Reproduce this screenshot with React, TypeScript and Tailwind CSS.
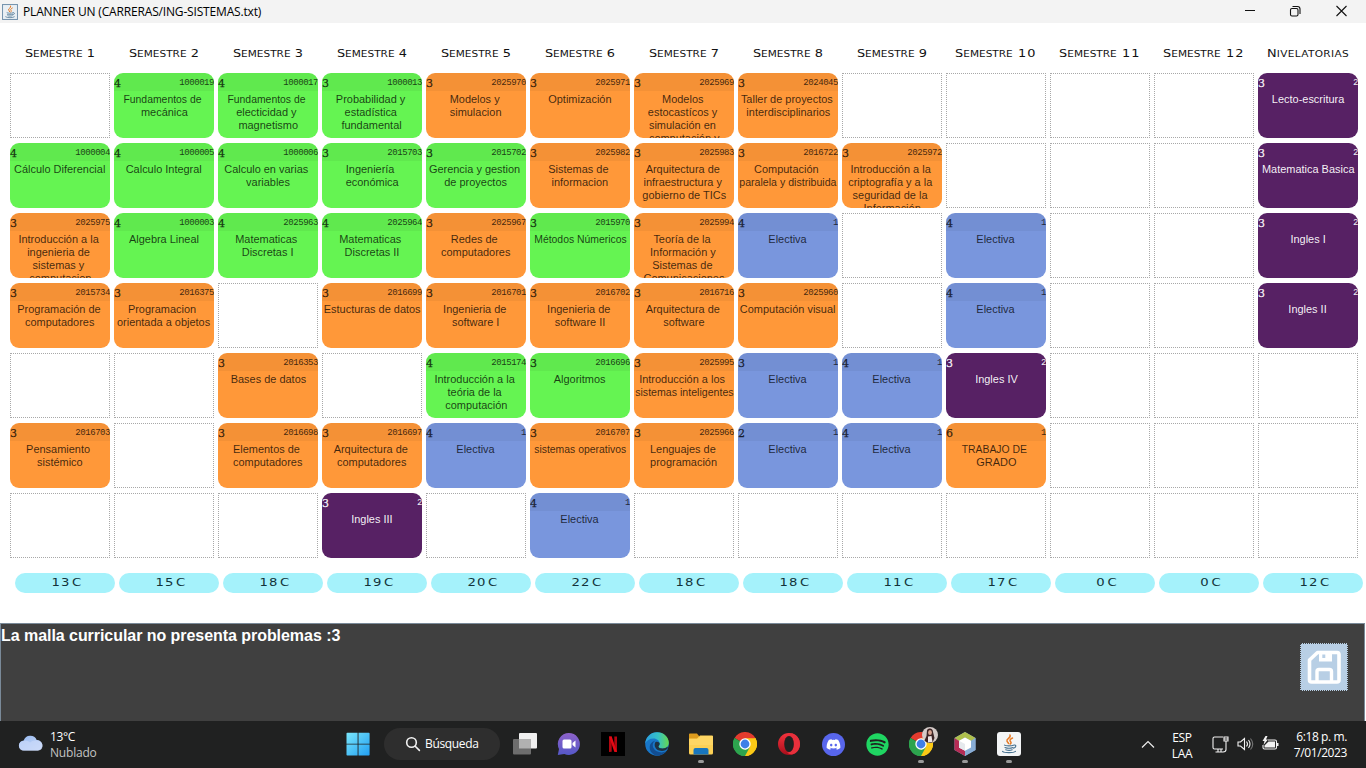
import React from "react";
import { FaDiscord, FaSpotify } from "react-icons/fa";

type Kind = "g" | "o" | "b" | "p";
type Course = { kind: Kind; credits: number; code: string; lines: string[] };
type Cell = Course | null;

const c = (kind: Kind, credits: number, code: string, text: string): Course => ({
  kind,
  credits,
  code,
  lines: text.split("|"),
});
const elective = (credits = 4): Course => c("b", credits, "1", "Electiva");
const _ = null;

const kindClass: Record<Kind, string> = {
  g: "bg-[#65f452] text-black/75",
  o: "bg-[#ff9839] text-black/75",
  b: "bg-[#7996dd] text-black/75",
  p: "bg-[#572164] text-white/95",
};

const headings = [
  "Semestre 1", "Semestre 2", "Semestre 3", "Semestre 4", "Semestre 5", "Semestre 6", "Semestre 7",
  "Semestre 8", "Semestre 9", "Semestre 10", "Semestre 11", "Semestre 12", "Nivelatorias",
];
const totals = [13, 15, 18, 19, 20, 22, 18, 18, 11, 17, 0, 0, 12];

const rows: Cell[][] = [
  [
    _,
    c("g", 4, "1000019", "Fundamentos de|mecánica"),
    c("g", 4, "1000017", "Fundamentos de|electicidad y|magnetismo"),
    c("g", 3, "1000013", "Probabilidad y|estadística|fundamental"),
    c("o", 3, "2025970", "Modelos y|simulacion"),
    c("o", 3, "2025971", "Optimización"),
    c("o", 3, "2025969", "Modelos|estocastícos y|simulación en|computación y"),
    c("o", 3, "2024045", "Taller de proyectos|interdisciplinarios"),
    _, _, _, _,
    c("p", 3, "2", "Lecto-escritura"),
  ],
  [
    c("g", 4, "1000004", "Cálculo Diferencial"),
    c("g", 4, "1000005", "Calculo Integral"),
    c("g", 4, "1000006", "Calculo en varias|variables"),
    c("g", 3, "2015703", "Ingeniería|económica"),
    c("g", 3, "2015702", "Gerencia y gestion|de proyectos"),
    c("o", 3, "2025982", "Sistemas de|informacion"),
    c("o", 3, "2025983", "Arquitectura de|infraestructura y|gobierno de TICs"),
    c("o", 3, "2016722", "Computación|paralela y distribuida"),
    c("o", 3, "2025972", "Introducción a la|criptografía y a la|seguridad de la|Información"),
    _, _, _,
    c("p", 3, "2", "Matematica Basica"),
  ],
  [
    c("o", 3, "2025975", "Introducción a la|ingenieria de|sistemas y|computacion"),
    c("g", 4, "1000003", "Algebra Lineal"),
    c("g", 4, "2025963", "Matematicas|Discretas I"),
    c("g", 4, "2025964", "Matematicas|Discretas II"),
    c("o", 3, "2025967", "Redes de|computadores"),
    c("g", 3, "2015970", "Métodos Númericos"),
    c("o", 3, "2025994", "Teoría de la|Información y|Sistemas de|Comunicaciones"),
    elective(),
    _,
    elective(),
    _, _,
    c("p", 3, "2", "Ingles I"),
  ],
  [
    c("o", 3, "2015734", "Programación de|computadores"),
    c("o", 3, "2016375", "Programacion|orientada a objetos"),
    _,
    c("o", 3, "2016699", "Estucturas de datos"),
    c("o", 3, "2016701", "Ingenieria de|software I"),
    c("o", 3, "2016702", "Ingenieria de|software II"),
    c("o", 3, "2016716", "Arquitectura de|software"),
    c("o", 3, "2025960", "Computación visual"),
    _,
    elective(),
    _, _,
    c("p", 3, "2", "Ingles II"),
  ],
  [
    _, _,
    c("o", 3, "2016353", "Bases de datos"),
    _,
    c("g", 4, "2015174", "Introducción a la|teória de la|computación"),
    c("g", 3, "2016696", "Algoritmos"),
    c("o", 3, "2025995", "Introducción a los|sistemas inteligentes"),
    elective(3),
    elective(),
    c("p", 3, "2", "Ingles IV"),
    _, _, _,
  ],
  [
    c("o", 3, "2016703", "Pensamiento|sistémico"),
    _,
    c("o", 3, "2016698", "Elementos de|computadores"),
    c("o", 3, "2016697", "Arquitectura de|computadores"),
    elective(),
    c("o", 3, "2016707", "sistemas operativos"),
    c("o", 3, "2025966", "Lenguajes de|programación"),
    elective(2),
    elective(),
    c("o", 6, "1", "TRABAJO DE|GRADO"),
    _, _, _,
  ],
  [
    _, _, _,
    c("p", 3, "2", "Ingles III"),
    _,
    elective(),
    _, _, _, _, _, _, _,
  ],
];

function stretch(line: string) {
  if (line.startsWith("Fundamentos") || line.startsWith("TRABAJO")) return "scale-x-[1.04]";
  if (line.startsWith("Métodos") || line.startsWith("sistemas o")) return "scale-x-[1.04]";
  if (line.length > 19) return "scale-x-[1.06]";
  return "scale-x-[1.095]";
}

function CourseCell({ cell }: { cell: Cell }) {
  if (!cell) return <div className="h-[65px] w-[100px] border border-dotted border-[#a8a8a8]" />;
  return (
    <div className={`flex h-[65px] w-[100px] flex-col overflow-hidden rounded-[9px] ${kindClass[cell.kind]}`}>
      <div className={`flex h-[18px] shrink-0 justify-between ${cell.kind === "p" ? "" : "bg-black/[0.045]"}`}>
        <span className="font-['DejaVu_Serif',serif] text-[11px] leading-[21px] [-webkit-text-stroke:0.25px]">
          {cell.credits}
        </span>
        <span className="font-['Liberation_Mono',monospace] text-[9px] leading-[21px] tracking-[-0.45px]">
          {cell.code}
        </span>
      </div>
      <div className="flex flex-col items-center pt-[2px]">
        {cell.lines.map((line, i) => (
          <span key={i} className={`text-[10px] leading-[13px] whitespace-pre ${stretch(line)}`}>
            {i < cell.lines.length - 1 ? line + " " : line}
          </span>
        ))}
      </div>
    </div>
  );
}

function Heading({ text }: { text: string }) {
  const [, word, number] = text.match(/^(\D*?)( \d+)?$/) || ["", text, ""];
  return (
    <div className="flex h-[14px] w-[100px] items-center justify-center font-['DejaVu_Sans',sans-serif] whitespace-pre text-[#111]">
      <span className="scale-x-[1.17] leading-[14px]">
        <span className="text-[11px]">{word[0]}</span>
        <span className={number ? "text-[9px]" : "text-[9px] tracking-[0.3px]"}>{word.slice(1).toUpperCase()}</span>
        {number && (
          <span className={number.length > 2 ? "text-[11px] tracking-[0.9px]" : "text-[11px]"}>{number}</span>
        )}
      </span>
    </div>
  );
}

function JavaCup() {
  return (
    <>
      <path d="M13 3c1.5 3-4 3.500-3 6 .3 1 1.300 1.500 1.500 2.500M15.500 6c-3 1.500-3 2.500-1.700 4 .6.8.2 1.500-.6 2" stroke="#e57a26" strokeWidth="1.500" fill="none" strokeLinecap="round" />
      <path d="M7.500 13.200c1 .9 7 .9 9 0M8 15.500c2 .8 6 .8 8 0M8.700 17.700c2 .7 5 .7 6.500 0M17 13c2.500-.5 2.500 2.500-.5 3.200M5.500 19.300c2 1.800 11 1.700 13 0" stroke="#47718f" strokeWidth="1.100" fill="none" strokeLinecap="round" />
    </>
  );
}

function ChromeLogo() {
  return (
    <svg width="24" height="24" viewBox="0 0 24 24">
      <path d="M12 12 1.600 6A12 12 0 0 1 22.400 6z" fill="#e33b2e" />
      <path d="M12 12H12L22.400 6A12 12 0 0 1 12 24z" fill="#fbc916" />
      <path d="M12 12 12 24A12 12 0 0 1 1.600 6z" fill="#2da44e" />
      <path d="M12 6.300H22.500A12 12 0 0 1 12 24l5-9z" fill="#fbc916" />
      <path d="M1.600 6 7 15l5 3 4.900-3L12 24A12 12 0 0 1 1.600 6z" fill="#2da44e" />
      <circle cx="12" cy="12" r="5.700" fill="#fff" />
      <circle cx="12" cy="12" r="4.400" fill="#3f7fe8" />
    </svg>
  );
}

function Slot({ children, open = false }: { children: React.ReactNode; open?: boolean }) {
  return (
    <div className="flex h-[47px] w-11 shrink-0 flex-col items-center pt-[11px]">
      <div className="flex h-6 w-6 items-center justify-center">{children}</div>
      {open && <div className="mt-1 h-[3px] w-1.5 rounded-full bg-[#9a9a9a]" />}
    </div>
  );
}

function Taskbar() {
  return (
    <div className="flex h-[47px] bg-[#202121] font-['Open_Sans',sans-serif] text-white">
      <div className="flex w-[336px] shrink-0 pl-[18px]">
        <svg className="mt-[13px]" width="26" height="18" viewBox="0 0 26 18">
          <defs>
            <linearGradient id="cloud" x1="0" y1="0" x2="1" y2="1">
              <stop offset="0" stopColor="#8fb4ee" />
              <stop offset="1" stopColor="#d9e4fb" />
            </linearGradient>
          </defs>
          <path d="M6 16.500a5 5 0 0 1-.3-10A7 7 0 0 1 18.700 6 5.300 5.300 0 0 1 20 16.500z" fill="url(#cloud)" />
          <path d="M5 7c3-1.500 6 0 7 1.500 2-2 5-2.500 7.500-1.800C23 7.500 25 9.500 24.500 12.500 24 15.500 22 16.500 20 16.500H6C3 16.500 1 14.500 1 11.500 1 9 3 7.200 5 7z" fill="#c7d7f8" opacity=".75" />
        </svg>
        <div className="pt-[8px] pl-[6px] text-[12px] leading-4 tracking-[-0.2px]">
          <div className="tracking-[-0.4px]">13°C</div>
          <div className="text-[#c4c4c4]">Nublado</div>
        </div>
      </div>
      <Slot>
        <svg width="24" height="24" viewBox="0 0 24 24">
          <defs>
            <linearGradient id="win" x1="0" y1="0" x2="1" y2="1" gradientUnits="objectBoundingBox">
              <stop offset="0" stopColor="#7ae6fb" />
              <stop offset="1" stopColor="#219ff2" />
            </linearGradient>
          </defs>
          <path d="M.5 1.500a.8.8 0 0 1 .8-.8h10.300v11H.5zM12.500.7h10.300a.8.8 0 0 1 .8.8v10.200H12.500zM.5 12.600h11.100v11H1.300a.8.8 0 0 1-.8-.8zM12.500 12.600h11.100v10.200a.8.8 0 0 1-.8.8H12.500z" fill="url(#win)" />
        </svg>
      </Slot>
      <div className="mt-[7px] ml-1 flex h-8 w-[116px] shrink-0 items-center rounded-full bg-[#2e2e2e] pl-[21px]">
        <svg width="16" height="16" viewBox="0 0 16 16" fill="none" stroke="#f2f2f2" strokeWidth="1.600" strokeLinecap="round">
          <circle cx="6.500" cy="6.500" r="4.800" />
          <path d="m10.200 10.200 4.200 4.200" />
        </svg>
        <span className="ml-1 text-[12px] tracking-[-0.35px]">Búsqueda</span>
      </div>
      <div className="w-[3px] shrink-0" />
      <Slot>
        <svg width="24" height="24" viewBox="0 0 24 24">
          <rect x="6" y="1" width="18" height="15.500" rx="1" fill="#f0f0f0" />
          <rect x="0" y="7" width="18" height="15.500" rx="1" fill="#6d6d6d" />
          <path d="M6 7h12v9.500H6z" fill="#b1b1b1" />
        </svg>
      </Slot>
      <Slot>
        <svg width="24" height="24" viewBox="0 0 24 24">
          <defs>
            <linearGradient id="chat" x1="0" y1="0" x2="0" y2="1">
              <stop offset="0" stopColor="#8d62c9" />
              <stop offset="1" stopColor="#5558c8" />
            </linearGradient>
          </defs>
          <path d="M12 1a11 11 0 1 1-4.700 21L.8 23l1.200-6A11 11 0 0 1 12 1z" fill="url(#chat)" />
          <rect x="5.500" y="7.500" width="9" height="9" rx="1.500" fill="#fff" />
          <path d="m15.500 11 3-2.600v7.200l-3-2.600z" fill="#fff" />
        </svg>
      </Slot>
      <Slot>
        <svg width="24" height="24" viewBox="0 0 24 24">
          <path d="M0 0h24v24H0z" fill="#000" />
          <path d="M8 4.500h2.700v15.200L8 20zM13.300 4.500H16V20l-2.700-.3z" fill="#b20710" />
          <path d="M8 4.500h2.700L16 20l-2.700-.3z" fill="#e50914" />
        </svg>
      </Slot>
      <Slot>
        <svg width="24" height="24" viewBox="0 0 24 24">
          <defs>
            <linearGradient id="edge" x1="0" y1="0" x2="1" y2="0">
              <stop offset="0" stopColor="#2c9fe0" />
              <stop offset=".55" stopColor="#35c1c5" />
              <stop offset="1" stopColor="#66d84f" />
            </linearGradient>
          </defs>
          <circle cx="12" cy="12" r="11.800" fill="#1877c9" />
          <path d="M.2 11.500C.8 4.800 6 .2 12 .2c7 0 11.800 5 11.800 10.300 0 4-3 6-6.300 6-2.500 0-4-1-4-2 0-.7 1.200-1.200 1.200-3C14.700 9 12 6.500 8.500 6.500 4.500 6.500 1.500 8.500.2 11.500z" fill="url(#edge)" />
          <path d="M10.500 8.500C8 10 7 13 8.500 16c2 4 7.500 5.500 12.500 3.600-2 2.700-5.500 4.200-9 4.200-4-1-7.500-4-7.300-8.500.1-3.500 2.500-6 5.800-6.800z" fill="#124d91" />
          <path d="M14.700 11.500c0 1.800-1.200 2.300-1.200 3 0 1 1.500 2 4 2 2 0 3.700-.7 4.800-1.700l.7 1.200c-2 3-6 3.500-9 2.500-3.500-1.200-5.500-5-3.500-8.500 2-.8 3.800 0 4.200 1.500z" fill="#202121" opacity=".8" />
        </svg>
      </Slot>
      <Slot open>
        <svg width="24" height="24" viewBox="0 0 24 24">
          <path d="M0 2.500C0 1.800.5 1.500 1 1.500h7l2 2.500v4H0z" fill="#dc9b1d" />
          <path d="M0 6.500h8l3-3h12q1 0 1 1V21q0 1.500-1.500 1.500h-21Q0 22.500 0 21z" fill="#fcd055" />
          <path d="M0 7h9l3-3h12v9H0z" fill="#ffdc73" opacity=".5" />
          <path d="M4.500 22.500V18q0-2 2-2h11q2 0 2 2v4.500z" fill="#1876bd" />
        </svg>
      </Slot>
      <Slot>
        <ChromeLogo />
      </Slot>
      <Slot>
        <svg width="24" height="24" viewBox="0 0 24 24">
          <defs>
            <linearGradient id="opera" x1="0" y1="0" x2="0" y2="1">
              <stop offset="0" stopColor="#f5333d" />
              <stop offset="1" stopColor="#a90e1b" />
            </linearGradient>
          </defs>
          <ellipse cx="12" cy="12" rx="11" ry="11" fill="url(#opera)" />
          <path d="M16.500 1.900C20.500 3.500 23 7.500 23 12s-2.500 8.500-6.500 10.100C14.500 23 12 22 10 20.500 14 21 17 17 17 12S14 3 10 3.500C12 2 14.500 1 16.500 1.900z" fill="#e8303c" />
          <ellipse cx="12" cy="12" rx="4.800" ry="8" fill="#202121" />
        </svg>
      </Slot>
      <Slot>
        <div className="flex h-[23px] w-[23px] shrink-0 items-center justify-center rounded-full bg-[#5866ec]">
          <FaDiscord size={15} color="#fff" />
        </div>
      </Slot>
      <Slot>
        <FaSpotify size={23} color="#1fd662" />
      </Slot>
      <Slot open>
        <div className="relative h-6 w-6">
          <ChromeLogo />
          <svg className="absolute -top-[5px] left-[13px]" width="16" height="16" viewBox="0 0 16 16">
            <circle cx="8" cy="8" r="8" fill="#d4cbc8" />
            <path d="M5 3c3-3 6-1 6 2l1.500 6-2 4.500C7 16.500 4 15.500 2.500 13.500L4.500 9z" fill="#3b2425" />
            <ellipse cx="8" cy="5.500" rx="1.900" ry="2.600" fill="#d9a591" />
            <path d="M6 9.500 9.500 9l1 6-4.500.5z" fill="#efe6e6" />
          </svg>
        </div>
      </Slot>
      <Slot open>
        <svg width="24" height="24" viewBox="0 0 24 24">
          <path d="m12 0 10.500 6v12L12 24 1.500 18V6z" fill="#8ea9d0" />
          <path d="m12 0 10.500 6-4.500 3-6-3.500L6 9 1.500 6z" fill="#aebf4c" />
          <path d="M1.500 6 6 9v6.500l6 3V24L1.500 18z" fill="#b52c55" />
          <path d="M22.500 6 18 9v6.500l-6 3V24l10.500-6z" fill="#88add5" />
          <path d="m12 5.500 6 3.200v6.800l-6 3.300-6-3.300V8.700z" fill="#fff" />
          <path d="m6 8.700 6 3.200v6.900l-6-3.300z" fill="#e5e9ed" />
        </svg>
      </Slot>
      <Slot open>
        <svg width="24" height="24" viewBox="0 0 24 24">
          <rect width="24" height="24" rx="3" fill="#f3f5f6" />
          <JavaCup />
        </svg>
      </Slot>
      <div className="flex flex-1 justify-end pr-[19px]">
        <svg className="mt-[19px] mr-[16px]" width="14" height="9" viewBox="0 0 14 9" fill="none" stroke="#eee" strokeWidth="1.200">
          <path d="m1 7.500 6-6 6 6" />
        </svg>
        <div className="w-[22px] pt-[9px] text-center text-[12px] leading-4 tracking-[-0.3px]">
          <div>ESP</div>
          <div>LAA</div>
        </div>
        <div className="ml-[19px] flex gap-2 pt-[15px]">
          <svg width="17" height="17" viewBox="0 0 17 17" fill="none" stroke="#f2f2f2" strokeWidth="1.100">
            <path d="M11 1H2.500Q1 1 1 2.500v9Q1 13 2.500 13H11M3.500 16h8M6 13v3M9 13v3M12 1h4v4h-4zM12 3h4M14 5v8.500q0 2.500-3 2.500" />
          </svg>
          <svg width="17" height="17" viewBox="0 0 17 17" fill="none" stroke="#f2f2f2" strokeWidth="1.100">
            <path d="M1 6h2.500L7.500 2.500v11L3.500 10H1zM9.500 5.500q2 2.500 0 5M11.500 4q3 4 0 8" />
            <path d="M13.500 2.500q4.500 5.500 0 11" opacity=".4" />
          </svg>
          <svg width="17" height="17" viewBox="0 0 17 17">
            <path d="M6 4h7q1.500 0 1.500 1.500v6q0 1.500-1.500 1.500H2.500Q1 13 1 11.500V9" fill="none" stroke="#f2f2f2" strokeWidth="1.100" />
            <path d="M6.500 5.500H13v6H2.500V9.500zM15 7h1.500v3H15zM3.500 0 .5 5h2L1.500 9l4.500-5.500H4L5.500 0z" fill="#f2f2f2" />
          </svg>
        </div>
        <div className="w-[68px] pt-[8px] text-right text-[12px] leading-4 tracking-[-0.4px]">
          <div>6:18 p. m.</div>
          <div>7/01/2023</div>
        </div>
      </div>
    </div>
  );
}

export default function App() {
  return (
    <div className="flex h-[768px] w-[1366px] flex-col overflow-hidden bg-white font-['Liberation_Sans',Arial,sans-serif]">
      <div className="flex h-[23px] shrink-0 items-center bg-[#f3f3f3] pl-[2px] text-black">
        <svg width="16" height="16" viewBox="0 0 24 24">
          <rect x=".8" y=".8" width="22.400" height="22.400" fill="#e9eff4" stroke="#7391ac" strokeWidth="1.500" />
          <JavaCup />
        </svg>
        <span className="ml-[5px] font-['Open_Sans',sans-serif] text-[12px] tracking-[-0.17px]">
          PLANNER UN (CARRERAS/ING-SISTEMAS.txt)
        </span>
        <svg className="mr-[18px] ml-auto" width="104" height="14" viewBox="0 0 104 14" fill="none" stroke="#111" strokeWidth="1.100">
          <path d="M1 5.500h10M92.500 1l10 10M102.500 1l-10 10" />
          <rect x="46.500" y="3.500" width="7.500" height="7.500" rx="1.500" />
          <path d="M48.500 1.500h5q2.500 0 2.500 2.500v5" />
        </svg>
      </div>

      <main className="flex h-[600px] shrink-0 flex-col pt-[23px]">
        <div className="flex gap-1 pl-[10px]">
          {headings.map((h) => (
            <Heading key={h} text={h} />
          ))}
        </div>
        <div className="mt-[13px] grid grid-cols-[repeat(13,100px)] gap-x-1 gap-y-[5px] pl-[10px]">
          {rows.flatMap((row, r) => row.map((cell, i) => <CourseCell key={`${r}-${i}`} cell={cell} />))}
        </div>
        <div className="mt-[15px] flex gap-1 pl-[15px]">
          {totals.map((t, i) => (
            <div
              key={i}
              className="flex h-5 w-[100px] shrink-0 items-center justify-center rounded-full bg-[#a5f2fb] pt-px pl-[3px] font-['DejaVu_Sans',sans-serif] text-[11px] text-[#12323a]"
            >
              <span className="scale-x-[1.2] [word-spacing:-2px]">
                <span className="tracking-[0.8px]">{t}</span> C
              </span>
            </div>
          ))}
        </div>
      </main>

      <div className="mr-px flex h-[98px] shrink-0 justify-between border border-b-0 border-[#7a8a99] bg-[#404040]">
        <p className="pt-[3px] text-[16px] leading-[18px] font-bold tracking-[-0.05px] text-white">
          La malla curricular no presenta problemas :3
        </p>
        <button className="mt-[19px] mr-4 flex h-12 w-12 items-center justify-center border border-dotted border-[#404040] bg-[#b8cfe5] bg-clip-border">
          <svg width="34" height="34" viewBox="0 0 34 34" fill="none" stroke="#fff" strokeWidth="3.600" strokeLinejoin="round">
            <path d="M10.500 2.500H30q2 0 2 2V30q0 2-2 2H4.500q-2 0-2-2V10z" />
            <path d="M10 31V21.500q0-2 2-2h10.500q2 0 2 2V31" strokeWidth="3.400" />
            <path d="M12 2h13v9.500H12z" fill="#fff" stroke="none" />
            <path d="M15.300 4.500h3v3.500h-3z" fill="#b8cfe5" stroke="none" />
          </svg>
        </button>
      </div>
      <Taskbar />
    </div>
  );
}
